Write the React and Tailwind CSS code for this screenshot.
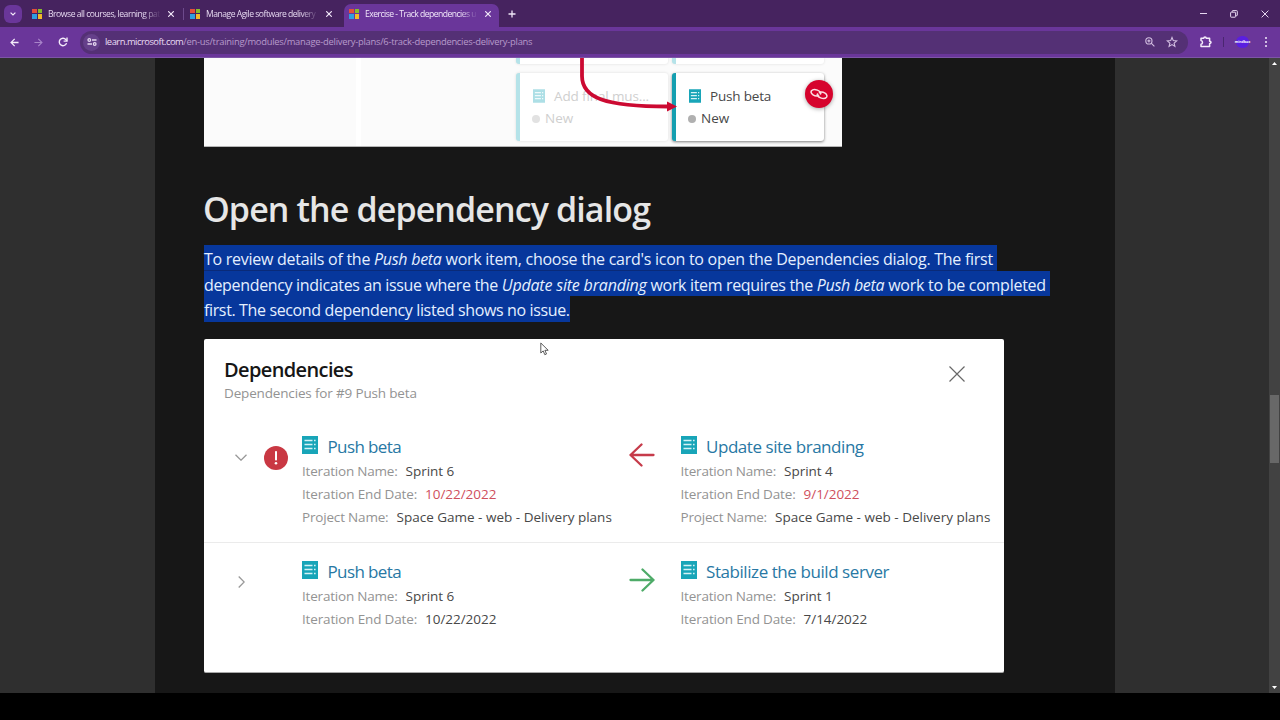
const FONT = "font-['Open_Sans','Noto_Sans',sans-serif]";

function MsLogo() {
  return (
    <span className="grid size-[10px] shrink-0 grid-cols-2 gap-px">
      <span className="bg-[#e2503a]" />
      <span className="bg-[#86bc2c]" />
      <span className="bg-[#2f9fe0]" />
      <span className="bg-[#f2b928]" />
    </span>
  );
}

function TabClose() {
  return (
    <svg viewBox="0 0 6 6" className="size-[6px] shrink-0" stroke="#f0e6f8" strokeWidth="1.2" strokeLinecap="round">
      <path d="M.6.6l4.8 4.8M5.4.6L.6 5.4" />
    </svg>
  );
}

function TabTitle({ className, children }) {
  return (
    <span
      className={`overflow-hidden whitespace-nowrap text-[8.6px] leading-[14px] [mask-image:linear-gradient(to_right,black_84%,transparent)] ${className}`}
    >
      {children}
    </span>
  );
}

function TabStrip() {
  return (
    <div className="flex h-[27px] items-stretch bg-[#46235f] text-[#e6d8f0]">
      <div className="flex w-[32px] items-center pl-[4px]">
        <div className="flex size-[18px] items-center justify-center rounded-[6px] bg-[#6a369a]">
          <svg viewBox="0 0 6 4" className="h-[4px] w-[6px]" fill="none" stroke="#f4ecfa" strokeWidth="1.2">
            <path d="M.6.6L3 3L5.400.6" />
          </svg>
        </div>
      </div>
      <div className="flex w-[151px] items-center">
        <MsLogo />
        <TabTitle className="ml-[6px] w-[113px] tracking-[-0.47px]">Browse all courses, learning pat</TabTitle>
        <span className="ml-[7px] flex">
          <TabClose />
        </span>
      </div>
      <div className="my-auto h-[12px] w-px bg-[#6d4a8c]" />
      <div className="flex w-[160px] items-center pl-[6px]">
        <MsLogo />
        <TabTitle className="ml-[6px] w-[113px] tracking-[-0.5px]">Manage Agile software delivery</TabTitle>
        <span className="ml-[7px] flex">
          <TabClose />
        </span>
      </div>
      <div className="mt-[4px] flex w-[155px] items-center rounded-t-[7px] bg-[#6a369a] pb-[4px] pl-[5px]">
        <MsLogo />
        <TabTitle className="ml-[6px] w-[113px] tracking-[-0.53px] text-[#f2e8fa]">Exercise - Track dependencies u</TabTitle>
        <span className="ml-[7px] flex">
          <TabClose />
        </span>
      </div>
      <div className="flex w-[26px] items-center justify-center">
        <svg viewBox="0 0 8 8" className="size-[8px]" stroke="#f0e6f8" strokeWidth="1.3">
          <path d="M4 .5v7M.5 4h7" />
        </svg>
      </div>
      <div className="ml-auto flex items-center pr-[11px]">
        <svg viewBox="0 0 7 7" className="mr-[23px] size-[7px]" stroke="#e6d8f0" strokeWidth="1">
          <path d="M0 3.500h7" />
        </svg>
        <svg viewBox="0 0 8 8" className="mr-[23px] size-[8px]" fill="none" stroke="#e6d8f0" strokeWidth="1">
          <rect x=".6" y="2.200" width="5" height="5" rx=".6" />
          <path d="M2.200 2V1.200Q2.200.6 2.800.6H6.600Q7.300.6 7.300 1.300V5.100Q7.300 5.700 6.700 5.700H5.800" />
        </svg>
        <svg viewBox="0 0 8 8" className="size-[8px]" stroke="#e6d8f0" strokeWidth="1">
          <path d="M.6.6l6.800 6.800M7.400.6L.6 7.400" />
        </svg>
      </div>
    </div>
  );
}

function Toolbar() {
  return (
    <div className="flex h-[31px] items-center border-b border-[#7d55a6] bg-[#6a369a]">
      <svg viewBox="0 0 10 10" className="ml-[10px] size-[9px]" fill="none" stroke="#f4ecfa" strokeWidth="1.4">
        <path d="M9.500 5H1.500M5.200 1L1.200 5l4 4" />
      </svg>
      <svg viewBox="0 0 10 10" className="ml-[15px] size-[9px]" fill="none" stroke="#a883c9" strokeWidth="1.3">
        <path d="M.5 5H8.500M4.800 1L8.800 5l-4 4" />
      </svg>
      <svg viewBox="0 0 10 10" className="ml-[15px] size-[10px]" fill="none" stroke="#f4ecfa" strokeWidth="1.4">
        <path d="M8.500 6.100A3.700 3.700 0 1 1 7.900 2.700L9 3.900" />
        <path d="M9 .6v3.500H5.600" />
      </svg>
      <div className="ml-[12px] flex h-[23px] w-[1108px] items-center rounded-full bg-[#543075] pl-[3px]">
        <div className="flex size-[17px] items-center justify-center rounded-full bg-[#65408a]">
          <svg viewBox="0 0 10 8" className="h-[8px] w-[10px]" fill="none" stroke="#e6d8f0" strokeWidth="1.3">
            <circle cx="2.300" cy="2" r="1.300" />
            <path d="M5 2H9.500M.5 6H5" />
            <circle cx="7.700" cy="6" r="1.300" />
          </svg>
        </div>
        <span className="ml-[5px] whitespace-nowrap text-[9.4px] leading-[14px] tracking-[-0.26px] text-[#b79acb]">
          <span className="tracking-[-0.5px] text-[#eadcf4]">learn.microsoft.com</span>
          /en-us/training/modules/manage-delivery-plans/6-track-dependencies-delivery-plans
        </span>
        <svg viewBox="0 0 10 10" className="ml-auto size-[10px]" fill="none" stroke="#d3bfe2" strokeWidth="1.1">
          <circle cx="3.900" cy="3.900" r="3.100" />
          <path d="M6.200 6.200L9.400 9.400M3.900 2.400v3M2.400 3.900h3" />
        </svg>
        <svg viewBox="0 0 12 12" className="mr-[10px] ml-[11px] size-[12px]" fill="none" stroke="#d3bfe2" strokeWidth="1.1">
          <path d="M6 1.500L7.300 4.600L10.700 4.900L8.100 7.100L8.900 10.400L6 8.600L3.100 10.400L3.900 7.100L1.300 4.900L4.700 4.600Z" />
        </svg>
      </div>
      <svg viewBox="0 0 12 12" className="ml-[12px] size-[12px]" fill="none" stroke="#f4ecfa" strokeWidth="1.5" strokeLinejoin="round">
        <path d="M1 2.200H3.800Q3.800 1 5 1T6.200 2.200H9.600V5.200Q11 5.200 11 6.300T9.600 7.400V10.600H1V8.300Q2.500 8.100 2.500 6.400T1 4.600Z" />
      </svg>
      <div className="ml-[11px] h-[10px] w-px bg-[#4a2670]" />
      <div className="ml-[12px] flex h-[12px] w-[13px] items-center justify-center rounded-full bg-[#5a1fe0] text-[3.5px] font-bold leading-none text-white">
        <span>mindbox</span>
      </div>
      <div className="ml-[16px] flex flex-col gap-[2px]">
        <span className="size-[2px] rounded-full bg-[#f4ecfa]" />
        <span className="size-[2px] rounded-full bg-[#f4ecfa]" />
        <span className="size-[2px] rounded-full bg-[#f4ecfa]" />
      </div>
    </div>
  );
}

function ItemIcon({ className }) {
  return (
    <svg viewBox="0 0 16 18" className={`shrink-0 ${className}`}>
      <rect width="16" height="18" fill="#18a5b8" />
      <path d="M2.500 4.500H10.500M2.500 8.500H10.500M2.500 12.500H10.500M12 4.500H13.600M12 8.500H13.600M12 12.500H13.600" stroke="#d5f3f6" strokeWidth="1.400" />
    </svg>
  );
}

function PlanCard({ title, titleClass, active }) {
  return (
    <div
      className={`h-[68px] w-[152px] rounded-[3px] border-l-4 bg-white pt-[11px] pl-[13px] ${
        active
          ? "border-[#159fb0] shadow-[0_1px_3px_rgba(0,0,0,0.5)]"
          : "border-[#b5e3e9] shadow-[0_0_3px_rgba(0,0,0,0.12)]"
      }`}
    >
      <div className="flex h-[23px] items-center">
        <ItemIcon className={`h-[14px] w-[12px] ${active ? "" : "opacity-35"}`} />
        <span className={`ml-[9px] whitespace-nowrap pt-px text-[13.5px] ${active ? "text-[#484848]" : "text-[#cfcfcf]"} ${titleClass}`}>{title}</span>
      </div>
      <div className="flex h-[23px] items-center">
        <span className={`-ml-px size-[8px] rounded-full ${active ? "bg-[#b0b0b0]" : "bg-[#e2e2e2]"}`} />
        <span className={`ml-[5px] text-[13.5px] ${active ? "text-[#484848]" : "text-[#cfcfcf]"}`}>New</span>
      </div>
    </div>
  );
}

function PlanImage() {
  return (
    <div className="relative flex h-[89px] w-[638px] overflow-hidden border-b border-[#b5b5b5] bg-[#fbfbfb]">
      <div className="w-[152px]" />
      <div className="w-[5px] bg-white" />
      <div className="ml-[155px] flex flex-col gap-[9px]">
        <div className="flex gap-[4px]">
          <div className="h-[6px] w-[152px] rounded-b-[3px] border-l-4 border-[#b5e3e9] bg-white shadow-[0_0_3px_rgba(0,0,0,0.12)]" />
          <div className="h-[6px] w-[152px] rounded-b-[3px] border-l-4 border-[#b5e3e9] bg-white shadow-[0_0_3px_rgba(0,0,0,0.12)]" />
        </div>
        <div className="flex gap-[4px]">
          <PlanCard title="Add final mus..." titleClass="tracking-[-0.13px]" />
          <PlanCard title="Push beta" titleClass="tracking-[-0.19px]" active />
        </div>
      </div>
      <svg viewBox="0 0 638 89" className="absolute inset-0 h-[89px] w-[638px]" fill="none">
        <path d="M378 0V18C378 40 401 48.500 464 48.500" stroke="#cc0a32" strokeWidth="3.800" />
        <path d="M463 43.500L473 48.500L463 53.500Z" fill="#cc0a32" />
      </svg>
      <div className="absolute top-[22px] left-[601px] flex size-[28px] items-center justify-center rounded-full bg-[#d6032d] shadow-[0_1px_4px_rgba(0,0,0,0.35)]">
        <svg viewBox="0 0 18 12" className="h-[12px] w-[18px]" fill="none" stroke="#fbdfe4" strokeWidth="1.500" strokeLinecap="round">
          <path d="M8.600 7.200C7.200 8.300 4.600 7.800 3 6.800C1.200 5.700.6 4 1.500 2.700C2.700 1.300 5.300 1.300 7.400 2.100C9.900 3.100 11.300 4.700 10.600 6" />
          <path d="M9.400 4.800C10.800 3.700 13.400 4.200 15 5.200C16.800 6.300 17.400 8 16.500 9.300C15.300 10.700 12.700 10.700 10.600 9.900C8.100 8.900 6.700 7.300 7.400 6" />
        </svg>
      </div>
    </div>
  );
}

function Selection() {
  return (
    <p className="mt-[10px] text-[16px] leading-[25px] whitespace-pre text-[#e4efff]">
      <span className="block h-[26px] w-[793px] border-b border-[#0a2a78] bg-[#07379c] pt-[2px] tracking-[-0.27px]">
        To review details of the <em>Push beta</em> work item, choose the card's icon to open the Dependencies dialog. The first
      </span>
      <span className="block h-[25px] w-[846px] bg-[#07379c] pt-[2px] tracking-[-0.335px]">
        dependency indicates an issue where the <em className="tracking-[-0.188px]">Update site branding</em> work item requires the{" "}
        <em className="tracking-[-0.286px]">Push beta</em>
        <span className="tracking-[-0.266px]"> work to be completed</span>
      </span>
      <span className="block h-[26px] w-[366px] bg-[#07379c] pt-[2px] tracking-[-0.365px]">first. The second dependency listed shows no issue.</span>
    </p>
  );
}

function Field({ label, value, alert, labelClass, valueClass }) {
  return (
    <div className="flex h-[23px] items-center whitespace-nowrap text-[13.5px]">
      <span className={`text-[#939393] ${labelClass}`}>{label}</span>
      <span className={`ml-[8px] ${alert ? "text-[#cf4f5d]" : "text-[#484848]"} ${valueClass || ""}`}>{value}</span>
    </div>
  );
}

function WorkItem({ title, titleClass, sprint, date, alert, project }) {
  return (
    <div>
      <div className="flex h-[26px] items-start">
        <ItemIcon className="mt-[2px] h-[18px] w-[16px]" />
        <span className={`ml-[9.500px] whitespace-nowrap text-[17px] leading-[25px] text-[#2878a4] ${titleClass}`}>{title}</span>
      </div>
      <Field label="Iteration Name:" value={sprint} labelClass="tracking-[-0.2px]" valueClass="tracking-[-0.05px]" />
      <Field label="Iteration End Date:" value={date} alert={alert} labelClass="tracking-[-0.16px]" valueClass="tracking-[-0.04px]" />
      {project && <Field label="Project Name:" value={project} labelClass="tracking-[-0.18px]" />}
    </div>
  );
}

function Arrow({ left }) {
  return (
    <svg viewBox="0 0 26 24" className={`h-[24px] w-[26px] ${left ? "-scale-x-100 text-[#c63b4a]" : "text-[#4eab68]"}`} fill="none" stroke="currentColor" strokeWidth="2.300" strokeLinecap="round" strokeLinejoin="round">
      <path d="M1.500 12H24.500M13.500 1.500L24.500 12L13.500 22.500" />
    </svg>
  );
}

function Dialog() {
  return (
    <div className="mt-[17px] h-[334px] w-[800px] rounded-[2px] border-b border-[#a8a8a8] bg-white">
      <div className="flex h-[93px] items-start justify-between pt-[18px] pr-[39px] pl-[20px]">
        <div>
          <div className="text-[20px] leading-[26px] font-semibold tracking-[-0.62px] text-[#161616]">Dependencies</div>
          <div className="text-[13.5px] leading-[20px] tracking-[-0.16px] text-[#939393]">Dependencies for #9 Push beta</div>
        </div>
        <svg viewBox="0 0 16 16" className="mt-[9px] size-[16px]" stroke="#686868" strokeWidth="1.200">
          <path d="M.5.5l15 15M15.500.5l-15 15" />
        </svg>
      </div>
      <div className="grid h-[110px] grid-cols-[56px_42px_326.5px_52px_1fr] items-start pt-[2px]">
        <svg viewBox="0 0 12 7" className="mt-[20px] ml-[31px] h-[7px] w-[12px]" fill="none" stroke="#999" strokeWidth="1.300">
          <path d="M.5.7L6 6.200L11.500.7" />
        </svg>
        <div className="mt-[12px] ml-[4px] flex size-[24px] items-center justify-center rounded-full bg-[#c93843]">
          <svg viewBox="0 0 4 14" className="h-[14px] w-[4px]" fill="#fff">
            <rect x="1" y="0" width="2" height="9.500" rx=".8" />
            <circle cx="2" cy="12.300" r="1.300" />
          </svg>
        </div>
        <WorkItem title="Push beta" titleClass="tracking-[-0.62px]" sprint="Sprint 6" date="10/22/2022" alert project="Space Game - web - Delivery plans" />
        <div className="pt-[9px]">
          <Arrow left />
        </div>
        <WorkItem title="Update site branding" titleClass="tracking-[-0.45px]" sprint="Sprint 4" date="9/1/2022" alert project="Space Game - web - Delivery plans" />
      </div>
      <div className="grid h-[110px] grid-cols-[56px_42px_326.5px_52px_1fr] items-start border-t border-[#ebebeb] pt-[16px]">
        <svg viewBox="0 0 7 12" className="mt-[17px] ml-[34px] h-[12px] w-[7px]" fill="none" stroke="#999" strokeWidth="1.300">
          <path d="M.7.500L6.200 6L.7 11.500" />
        </svg>
        <div />
        <WorkItem title="Push beta" titleClass="tracking-[-0.62px]" sprint="Sprint 6" date="10/22/2022" />
        <div className="pt-[9px]">
          <Arrow />
        </div>
        <WorkItem title="Stabilize the build server" titleClass="tracking-[-0.43px]" sprint="Sprint 1" date="7/14/2022" />
      </div>
    </div>
  );
}

export default function App() {
  return (
    <div className={`relative flex h-[720px] w-[1280px] flex-col overflow-hidden bg-black ${FONT}`}>
      <TabStrip />
      <Toolbar />
      <div className="flex h-[635px] bg-[#2f2f2f]">
        <main className="ml-[155px] w-[960px] bg-[#171717] pl-[49px]">
          <PlanImage />
          <h1 className="mt-[37px] -ml-px h-[51px] text-[34px] leading-[51px] font-semibold tracking-[-0.89px] whitespace-nowrap text-[#e6e6e6]">
            Open the dependency dialog
          </h1>
          <Selection />
          <Dialog />
        </main>
        <div className="ml-auto flex w-[11px] flex-col items-center bg-[#424242] pt-[4px] pb-[4px]">
          <svg viewBox="0 0 5 3" className="h-[3px] w-[5px]" fill="#fff">
            <path d="M2.500 0L5 3H0Z" />
          </svg>
          <div className="mt-[330px] h-[68px] w-[9px] bg-[#686868]" />
          <svg viewBox="0 0 5 3" className="mt-auto h-[3px] w-[5px]" fill="#fff">
            <path d="M0 0H5L2.500 3Z" />
          </svg>
        </div>
      </div>
      <svg viewBox="0 0 9 14" className="absolute top-[342px] left-[540px] h-[14px] w-[9px]" fill="#fff" stroke="#333" strokeWidth=".8">
        <path d="M.8 1V11L3.200 8.900L4.800 12.700L6.500 12L4.900 8.300H8.200Z" />
      </svg>
    </div>
  );
}
